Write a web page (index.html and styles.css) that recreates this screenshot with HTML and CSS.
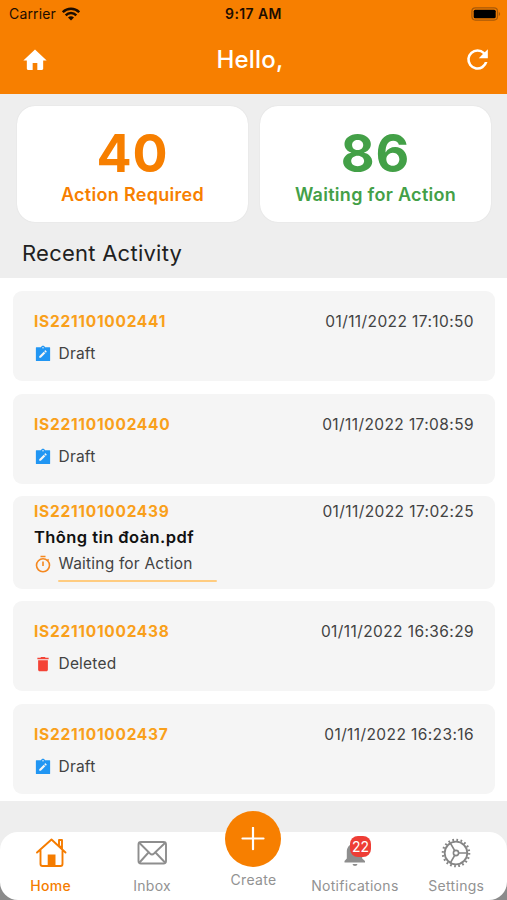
FILE: index.html
```html
<!DOCTYPE html>
<html lang="en">
<head>
<meta charset="utf-8">
<title>Home</title>
<link rel="stylesheet" href="styles.css">
</head>
<body>
<svg class="defs" aria-hidden="true">
  <symbol id="edit" viewBox="0 0 24 24"><path fill="#2196f3" fill-rule="evenodd" d="M21 3h-6.200C14.400 1.800 13.300 1 12 1s-2.400.800-2.800 2H3Q2.500 3 2.500 3.500v17q0 .8.800.8h17.400q.8 0 .8-.8v-17Q21.500 3 21 3zM12 2.800a1 1 0 1 1 0 2 1 1 0 0 1 0-2zM9.100 17H7v-2.140l5.960-5.950 2.120 2.120zM16.850 9.270l-1.060 1.060-2.120-2.120 1.060-1.060c.2-.2.510-.2.710 0l1.410 1.410c.2.200.2.510 0 .710z"/></symbol>
</svg>
<div class="screen">
  <header class="top">
    <div class="status">
      <div class="carrier"><span>Carrier</span>
        <svg width="18" height="14" viewBox="0 0 18 14"><g fill="none" stroke="#1c0d00" stroke-width="2.500"><path d="M.8 5.200a11.600 11.600 0 0 1 16.400 0"/><path d="M3.700 8.300a7.500 7.500 0 0 1 10.600 0"/></g><path fill="#1c0d00" d="M6 10.600a4.300 4.300 0 0 1 6 0l-3 3z"/></svg>
      </div>
      <b class="clock">9:17 AM</b>
      <svg class="battery" width="30" height="14" viewBox="0 0 30 14"><rect x=".9" y=".9" width="25.600" height="12.200" rx="3.500" fill="none" stroke="#a85a08" stroke-width="1.200"/><rect x="2.700" y="2.700" width="22" height="8.600" rx="1.500" fill="#000"/><path d="M27.800 4.900c1.800.7 1.800 3.500 0 4.200z" fill="#a85a08"/></svg>
    </div>
    <div class="bar">
      <svg width="28" height="28" viewBox="0 0 24 24"><path fill="#fff" d="M10 20.500v-6h4v6h4q1 0 1-1v-7h3L12 3 2 12.500h3v7q0 1 1 1z"/></svg>
      <h1>Hello,</h1>
      <svg width="31" height="31" viewBox="0 0 24 24"><path fill="#fff" d="M17.650 6.350A7.960 7.960 0 0 0 12 4a8 8 0 1 0 7.730 10h-2.080A6 6 0 1 1 12 6c1.660 0 3.140.69 4.220 1.780L13 11h7V4z"/></svg>
    </div>
  </header>
  <section class="summary">
    <div class="stats">
      <div class="stat orange"><b>40</b><span>Action Required</span></div>
      <div class="stat green"><b>86</b><span>Waiting for Action</span></div>
    </div>
    <h2>Recent Activity</h2>
  </section>
  <main class="list">
    <article class="item">
      <div class="row"><b>IS221101002441</b><time>01/11/2022 17:10:50</time></div>
      <div class="state"><svg width="18" height="18"><use href="#edit"/></svg><span>Draft</span></div>
    </article>
    <article class="item">
      <div class="row"><b>IS221101002440</b><time>01/11/2022 17:08:59</time></div>
      <div class="state"><svg width="18" height="18"><use href="#edit"/></svg><span>Draft</span></div>
    </article>
    <article class="item file">
      <div class="row"><b>IS221101002439</b><time>01/11/2022 17:02:25</time></div>
      <strong>Thông tin đoàn.pdf</strong>
      <div class="state"><svg width="18" height="18" viewBox="0 0 18 18"><g fill="none" stroke="#f5881f" stroke-width="1.600"><circle cx="9" cy="10.300" r="6.500"/><path d="M6.500 1.500h5M9 6.500v4.500M13.300 5.700l1.300-1.300"/></g></svg><span>Waiting for Action</span></div>
      <div class="progress"></div>
    </article>
    <article class="item">
      <div class="row"><b>IS221101002438</b><time>01/11/2022 16:36:29</time></div>
      <div class="state"><svg width="18" height="18" viewBox="0 0 24 24"><path fill="#f44336" d="M5.500 19.500c0 1.100.9 2 2 2h9c1.100 0 2-.9 2-2V7h-13zM19.500 3.500h-4l-1-1h-5l-1 1h-4v2h15z"/></svg><span>Deleted</span></div>
    </article>
    <article class="item">
      <div class="row"><b>IS221101002437</b><time>01/11/2022 16:23:16</time></div>
      <div class="state"><svg width="18" height="18"><use href="#edit"/></svg><span>Draft</span></div>
    </article>
  </main>
  <div class="dock">
    <nav>
      <a class="tab active"><svg width="32" height="32" viewBox="0 0 32 32"><g fill="none" stroke="#f57c00" stroke-width="1.900" stroke-linecap="round" stroke-linejoin="round"><path d="M2 15.500 16.500 2.500l14 13M5.500 13.500V27q0 2 2 2h18q2 0 2-2V13.500"/><path d="M24 8.500V3h3v8.500z"/></g><path fill="#f57c00" d="M12.700 17.500h7.800V29h-7.800z"/></svg><span>Home</span></a>
      <a class="tab"><svg width="32" height="32" viewBox="0 0 32 32"><g fill="none" stroke="#8e8e8e" stroke-width="1.900" stroke-linejoin="round"><rect x="2.500" y="5" width="27.500" height="21.500" rx="2.500"/><path d="m3.500 6 10.500 10.500q2 1.800 4 0L29 6M3.500 25.500l9-10M29 25.500l-9.500-10"/></g></svg><span>Inbox</span></a>
      <a class="tab create"><i><svg width="24" height="24" viewBox="0 0 24 24"><path d="M12 .8v21.400M1.500 11.500h21" fill="none" stroke="#fff" stroke-width="2.200" stroke-linecap="round"/></svg></i><span>Create</span></a>
      <a class="tab"><svg width="32" height="32" viewBox="0 0 32 32"><path fill="#8e8e8e" d="M5.500 25.500v-1.600l2.300-2.300V15c0-4 2-7 5.600-7.900V6c0-2.800 4.200-2.800 4.200 0v1.100c3.600.9 5.600 3.900 5.600 7.900v6.600l2.800 2.300v1.600zM13.500 27h5q-.3 2-2.500 2t-2.500-2"/></svg><em>22</em><span>Notifications</span></a>
      <a class="tab"><svg width="32" height="32" viewBox="0 0 32 32"><g fill="none" stroke="#858585"><circle cx="16" cy="16" r="11.300" stroke-width="1.800"/><circle cx="16" cy="16" r="13.200" stroke-width="2.200" stroke-dasharray="1.750 2.397"/><circle cx="16" cy="16" r="2.600" stroke-width="1.600"/><path stroke-width="1.700" d="M18.600 16h9M14.700 13.700l-4.500-7.800M14.700 18.300l-4.500 7.800"/></g></svg><span>Settings</span></a>
    </nav>
  </div>
</div>
</body>
</html>
```
FILE: styles.css
```css
* { box-sizing: border-box; }
body { margin: 0; font-family: Inter, "Noto Sans", sans-serif; color: #212121; background: #fff; }
h1, h2 { margin: 0; font-weight: 500; }
svg { display: block; flex: none; }
.defs { display: none; }
.screen { width: 507px; height: 900px; display: flex; flex-direction: column; overflow: hidden; }

.top { height: 94px; background: #f77f00; flex: none; }
.status { height: 27px; display: grid; grid-template-columns: 1fr auto 1fr; align-items: center; padding: 0 6px 0 9px; color: #1c0d00; font-size: 14px; }
.carrier { display: flex; align-items: center; gap: 6px; letter-spacing: .15px; }
.clock { font-weight: 600; font-size: 14px; letter-spacing: .4px; margin-right: 3px; }
.battery { justify-self: end; }
.bar { height: 66px; display: grid; grid-template-columns: 1fr auto 1fr; align-items: center; padding: 0 14px 1px 21px; color: #fff; }
.bar h1 { font-size: 24px; letter-spacing: .2px; margin-right: 14px; }
.bar svg:last-child { justify-self: end; }

.summary { height: 184px; flex: none; background: #eee; padding: 12px 16px 0 17px; }
.stats { display: grid; grid-template-columns: 1fr 1fr; gap: 12px; }
.stat { height: 116px; border-radius: 18px; background: #fff; display: flex; flex-direction: column; align-items: center; padding-top: 20px; box-shadow: 0 0 1px #ccc; }
.stat b { font-size: 52px; line-height: 56px; font-weight: 700; letter-spacing: 1px; }
.stat span { font-size: 18px; line-height: 26px; font-weight: 600; letter-spacing: .3px; }
.orange { color: #f77f00; }
.green { color: #43a047; }
.summary h2 { font-size: 22px; line-height: 28px; margin: 17px 0 0 5px; font-weight: 400; letter-spacing: .25px; }

.list { height: 523px; flex: none; padding: 13px 12px 0 13px; display: flex; flex-direction: column; gap: 12.500px; }
.item { height: 90px; flex: none; border-radius: 9px; background: #f5f5f5; padding: 20px 21px 0; font-size: 15.500px; line-height: 22px; color: #424242; }
.row { display: flex; justify-content: space-between; }
.row b { color: #f9a01b; font-weight: 700; letter-spacing: .72px; }
.row time { letter-spacing: .4px; }
.state { display: flex; align-items: center; gap: 6.500px; margin-top: 10px; letter-spacing: .2px; }
.item.file { height: 92.500px; padding-top: 4.500px; }
.file strong { display: block; color: #111; font-size: 16.500px; line-height: 26px; font-weight: 600; letter-spacing: .43px; margin-top: 1.500px; }
.file .state { margin-top: 3px; }
.progress { width: 159px; height: 2.500px; margin: 4.500px 0 0 24px; border-radius: 2px; background: #ffcc80; }

.dock { height: 99px; flex: none; padding-top: 31px; background: linear-gradient(#eee 60px, #8b8b8b 60px); }
nav { height: 68px; border-radius: 18px; background: #fff; display: grid; grid-template-columns: repeat(5, 1fr); }
.tab { position: relative; display: flex; flex-direction: column; align-items: center; padding-top: 5px; color: #929292; font-size: 14px; line-height: 18px; letter-spacing: .3px; }
.tab span { margin-top: 8px; }
.active { color: #f57c00; }
.active span { font-weight: 450; }
.create { padding: 0; margin-top: -21px; }
.create i { width: 56px; height: 56px; flex: none; border-radius: 50%; background: #f77f00; display: grid; place-items: center; }
.create span { margin-top: 4px; }
.tab em { position: absolute; top: 4px; left: 45.500px; width: 21.500px; height: 20.500px; border-radius: 8px; background: #ee3d35; color: #fff; font-size: 14px; line-height: 21px; font-style: normal; text-align: center; letter-spacing: 0; }
```
